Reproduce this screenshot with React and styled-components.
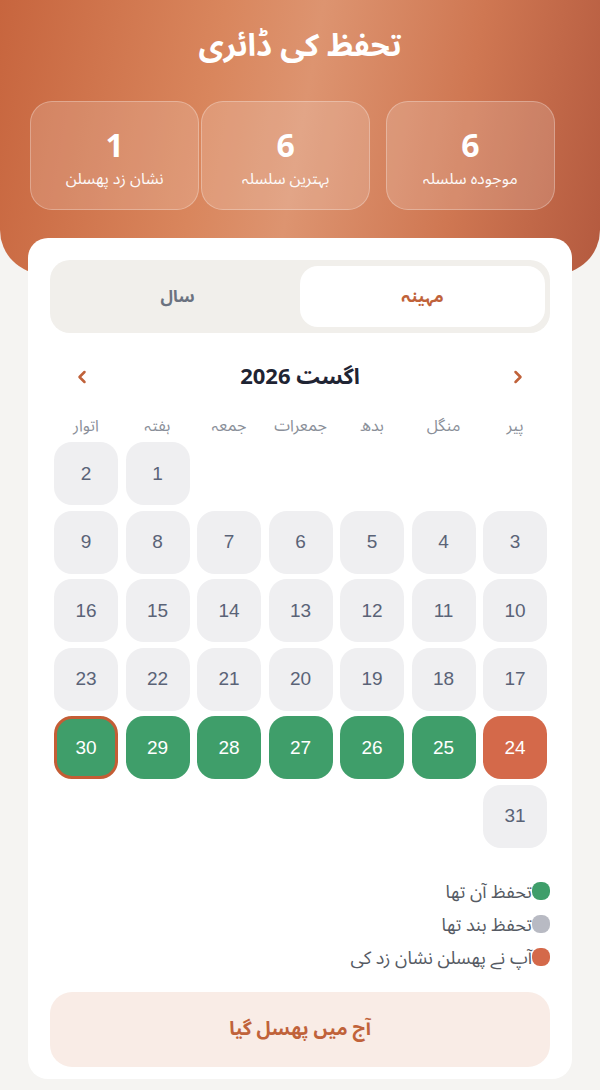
import React from "react";
import styled, { createGlobalStyle } from "styled-components";
import { ChevronLeft, ChevronRight } from "lucide-react";

const GlobalStyle = createGlobalStyle`
  html, body {
    margin: 0;
    padding: 0;
    background: #f5f4f2;
  }
  body {
    font-family: "Noto Sans", "Noto Sans Arabic", "Noto Naskh Arabic", "DejaVu Sans", sans-serif;
  }
`;

const Page = styled.div`
  direction: rtl;
  width: 600px;
  min-height: 1090px;
  background: #f5f4f2;
`;

const Header = styled.header`
  background: linear-gradient(100deg, #c7653e 0%, #d9865d 35%, #dd9470 50%, #cf7752 75%, #b45a3f 100%);
  border-radius: 0 0 44px 44px;
  padding: 20px 0 64px;
  color: #fff;
`;

const Title = styled.h1`
  margin: 0;
  text-align: center;
  font-size: 31px;
  font-weight: 700;
  line-height: 48px;
`;

const StatRow = styled.div`
  display: flex;
  padding: 0 45px 0 30px;
  margin-top: 33px;
`;

const StatCard = styled.div`
  width: 170px;
  height: 109px;
  box-sizing: border-box;
  margin-left: ${(p) => p.$gap}px;
  border-radius: 22px;
  background: rgba(255, 255, 255, 0.16);
  border: 1px solid rgba(255, 255, 255, 0.28);
  display: flex;
  flex-direction: column;
  align-items: center;
  justify-content: center;
  padding-top: 6px;
`;

const StatNumber = styled.div`
  font-size: 32px;
  font-weight: 700;
  line-height: 38px;
`;

const StatLabel = styled.div`
  font-size: 16px;
  line-height: 28px;
  opacity: 0.95;
`;

const Card = styled.main`
  margin: -36px 28px 10px;
  background: #fff;
  border-radius: 20px;
  padding: 22px 22px 12px;
  position: relative;
`;

const Tabs = styled.div`
  display: flex;
  background: #f1efeb;
  border-radius: 20px;
  padding: 6px 5px;
  height: 73px;
  box-sizing: border-box;
`;

const Tab = styled.div`
  flex: 1;
  display: flex;
  align-items: center;
  justify-content: center;
  border-radius: 18px;
  font-size: 17px;
  font-weight: 700;
  background: ${(p) => (p.$active ? "#fff" : "transparent")};
  color: ${(p) => (p.$active ? "#c0623a" : "#6b7280")};
`;

const MonthNav = styled.div`
  display: flex;
  align-items: center;
  justify-content: space-between;
  margin-top: 23px;
  padding: 0 22px;
  height: 42px;
`;

const MonthTitle = styled.div`
  font-size: 22px;
  font-weight: 700;
  color: #1f2433;
`;

const NavButton = styled.div`
  display: flex;
  align-items: center;
  color: #c0623a;
`;

const Weekdays = styled.div`
  display: grid;
  grid-template-columns: repeat(7, 64px);
  column-gap: 7.5px;
  padding: 0 3px;
  margin-top: 14px;
`;

const Weekday = styled.div`
  text-align: center;
  font-size: 16px;
  color: #8a8f99;
  line-height: 26px;
`;

const DayGrid = styled.div`
  display: grid;
  grid-template-columns: repeat(7, 64px);
  grid-auto-rows: 63px;
  column-gap: 7.5px;
  row-gap: 5.6px;
  padding: 0 3px;
  margin-top: 4px;
`;

const dayColors = {
  none: { bg: "#efeff1", fg: "#5a6377" },
  on: { bg: "#3f9e6a", fg: "#fff" },
  slip: { bg: "#d4694a", fg: "#fff" },
};

const Day = styled.div`
  grid-column: ${(p) => p.$col};
  display: flex;
  align-items: center;
  justify-content: center;
  border-radius: 18px;
  box-sizing: border-box;
  font-family: "Liberation Sans", Arial, sans-serif;
  font-size: 19px;
  background: ${(p) => dayColors[p.$status].bg};
  color: ${(p) => dayColors[p.$status].fg};
  border: ${(p) => (p.$today ? "3px solid #c45d35" : "none")};
`;

const Legend = styled.div`
  display: flex;
  flex-direction: column;
  gap: 6px;
  margin-top: 30px;
`;

const LegendItem = styled.div`
  display: flex;
  align-items: center;
  font-size: 18px;
  color: #555a63;
  line-height: 27px;
`;

const Dot = styled.span`
  width: 18px;
  height: 18px;
  border-radius: 8px;
  background: ${(p) => p.$color};
  flex-shrink: 0;
`;

const SlipButton = styled.button`
  display: block;
  width: 100%;
  height: 75px;
  margin-top: 21px;
  border: none;
  border-radius: 22px;
  background: #f9ece6;
  color: #c0623a;
  font-family: inherit;
  font-size: 19px;
  font-weight: 700;
`;

const weekdays = ["پیر", "منگل", "بدھ", "جمعرات", "جمعہ", "ہفتہ", "اتوار"];

const statusOf = (d) => {
  if (d === 24) return "slip";
  if (d >= 25 && d <= 30) return "on";
  return "none";
};

// August 2026 starts on a Saturday (Monday-first column 6)
const days = Array.from({ length: 31 }, (_, i) => i + 1);

export default function App() {
  return (
    <>
      <GlobalStyle />
      <Page>
        <Header>
          <Title>تحفظ کی ڈائری</Title>
          <StatRow>
            <StatCard $gap={15.5}>
              <StatNumber>6</StatNumber>
              <StatLabel>موجودہ سلسلہ</StatLabel>
            </StatCard>
            <StatCard $gap={1.7}>
              <StatNumber>6</StatNumber>
              <StatLabel>بہترین سلسلہ</StatLabel>
            </StatCard>
            <StatCard $gap={0}>
              <StatNumber>1</StatNumber>
              <StatLabel>نشان زد پھسلن</StatLabel>
            </StatCard>
          </StatRow>
        </Header>

        <Card>
          <Tabs>
            <Tab $active>مہینہ</Tab>
            <Tab>سال</Tab>
          </Tabs>

          <MonthNav>
            <NavButton>
              <ChevronRight size={20} strokeWidth={3} />
            </NavButton>
            <MonthTitle>اگست 2026</MonthTitle>
            <NavButton>
              <ChevronLeft size={20} strokeWidth={3} />
            </NavButton>
          </MonthNav>

          <Weekdays>
            {weekdays.map((w) => (
              <Weekday key={w}>{w}</Weekday>
            ))}
          </Weekdays>

          <DayGrid>
            {days.map((d) => (
              <Day
                key={d}
                $col={d === 1 ? 6 : "auto"}
                $status={statusOf(d)}
                $today={d === 30}
              >
                {d}
              </Day>
            ))}
          </DayGrid>

          <Legend>
            <LegendItem>
              <Dot $color="#3f9e6a" />
              تحفظ آن تھا
            </LegendItem>
            <LegendItem>
              <Dot $color="#b8bac3" />
              تحفظ بند تھا
            </LegendItem>
            <LegendItem>
              <Dot $color="#d4694a" />
              آپ نے پھسلن نشان زد کی
            </LegendItem>
          </Legend>

          <SlipButton>آج میں پھسل گیا</SlipButton>
        </Card>
      </Page>
    </>
  );
}
